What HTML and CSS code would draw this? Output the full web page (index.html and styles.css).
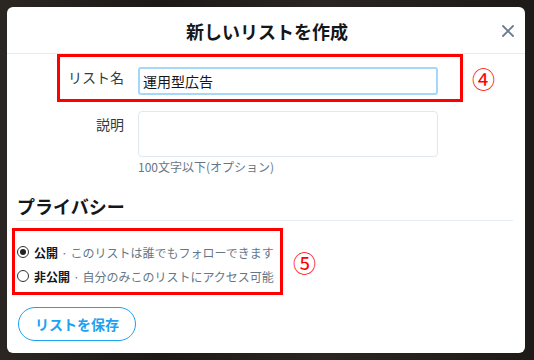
FILE: index.html
```html
<!DOCTYPE html>
<html lang="ja">
<head>
<meta charset="utf-8">
<title>新しいリストを作成</title>
<link rel="stylesheet" href="styles.css">
</head>
<body>
<div class="backdrop">
  <div class="modal">
    <header class="modal-header">
      <h1 class="modal-title">新しいリストを作成</h1>
      <button class="close-btn" aria-label="閉じる">
        <svg width="12" height="12" viewBox="0 0 12 12"><path d="M1 1 L11 11 M11 1 L1 11" stroke="#6b7c8f" stroke-width="1.8" stroke-linecap="round"/></svg>
      </button>
    </header>

    <div class="annot-row annot-row-1">
      <div class="mark-box field-box">
        <label class="field-label">リスト名</label>
        <input class="text-input" type="text" value="運用型広告">
      </div>
      <span class="annot-num">④</span>
    </div>

    <div class="field-row">
      <label class="field-label desc-label">説明</label>
      <div class="field-col">
        <textarea class="text-area"></textarea>
        <div class="help-text">100文字以下(オプション)</div>
      </div>
    </div>

    <h2 class="section-title">プライバシー</h2>

    <div class="annot-row annot-row-2">
      <div class="mark-box radio-box">
        <div class="radio-line">
          <span class="radio checked"></span>
          <span class="radio-name">公開</span><span class="radio-desc">· このリストは誰でもフォローできます</span>
        </div>
        <div class="radio-line">
          <span class="radio"></span>
          <span class="radio-name">非公開</span><span class="radio-desc">· 自分のみこのリストにアクセス可能</span>
        </div>
      </div>
      <span class="annot-num">⑤</span>
    </div>

    <div class="actions">
      <button class="save-btn">リストを保存</button>
    </div>
  </div>
</div>
</body>
</html>
```

FILE: styles.css
```css
* { box-sizing: border-box; }
html, body { margin: 0; padding: 0; }
body {
  width: 534px;
  height: 360px;
  overflow: hidden;
  background: linear-gradient(90deg, #2b2622 0%, #1c1916 30%, #2a2520 60%, #1d1a17 100%);
  font-family: "Noto Sans CJK JP", "Noto Sans", sans-serif;
  color: #14171a;
}
.backdrop {
  padding: 7px 9px 7px 7px;
}
.modal {
  width: 518px;
  height: 346px;
  background: #fff;
  border-radius: 6px;
  display: flex;
  flex-direction: column;
}
.modal-header {
  height: 47px;
  border-bottom: 1px solid #e6ecf0;
  display: flex;
  align-items: center;
  justify-content: center;
  position: relative;
}
.modal-title {
  margin: 0;
  font-size: 18px;
  line-height: 24px;
  font-weight: 700;
  margin-top: 2px;
  margin-left: 2px;
}
.close-btn {
  position: absolute;
  right: 11px;
  top: 18px;
  border: 0;
  background: none;
  padding: 0;
  width: 12px;
  height: 12px;
  display: flex;
}
.annot-row {
  display: flex;
  align-items: center;
}
.annot-row-1 {
  margin-left: 50px;
  gap: 9px;
}
.mark-box {
  border: 3px solid #ff0000;
}
.field-box {
  width: 406px;
  height: 48px;
  display: flex;
  align-items: flex-start;
  padding-top: 10px;
  gap: 14px;
}
.field-label {
  width: 64px;
  text-align: right;
  font-size: 14px;
  line-height: 20px;
  color: #333a40;
  flex: none;
}
.text-input {
  width: 300px;
  height: 28px;
  border: 2px solid #a6d7f8;
  border-radius: 3px;
  padding: 0 3px;
  font-family: "Noto Sans CJK JP", sans-serif;
  font-size: 14px;
  color: #14171a;
  outline: none;
}
.annot-num {
  color: #ff0000;
  font-size: 23px;
  line-height: 24px;
  font-family: "Noto Sans CJK JP", sans-serif;
}
.field-row {
  display: flex;
  gap: 14px;
  margin-left: 53px;
  margin-top: 9px;
}
.desc-label {
  margin-top: 3px;
}
.field-col {
  display: flex;
  flex-direction: column;
}
.text-area {
  width: 300px;
  height: 46px;
  border: 1px solid #e1e8ed;
  border-radius: 4px;
  resize: none;
  outline: none;
  display: block;
  font-family: "Noto Sans CJK JP", sans-serif;
}
.help-text {
  margin-top: 2px;
  font-size: 12px;
  line-height: 16px;
  color: #657786;
}
.section-title {
  margin: 19px 12px 0 10px;
  font-size: 18px;
  line-height: 24px;
  font-weight: 700;
  padding-bottom: 2px;
  border-bottom: 1px solid #e6ecf0;
}
.annot-row-2 {
  margin-left: 5px;
  margin-top: 7px;
  gap: 10px;
}
.radio-box {
  width: 271px;
  height: 67px;
  padding: 9px 0 4px 2px;
}
.radio-line {
  display: flex;
  align-items: center;
  height: 24px;
  font-size: 12px;
  white-space: nowrap;
}
.radio {
  width: 12px;
  height: 12px;
  border: 1px solid #333;
  border-radius: 50%;
  margin-right: 5px;
  flex: none;
  display: flex;
  align-items: center;
  justify-content: center;
  background: #fff;
}
.radio.checked::after {
  content: "";
  width: 6px;
  height: 6px;
  border-radius: 50%;
  background: #222;
}
.radio-name {
  font-weight: 700;
  color: #14171a;
}
.radio-desc {
  color: #657786;
  margin-left: 3px;
}
.actions {
  margin-top: 12px;
  margin-left: 11px;
}
.save-btn {
  height: 34px;
  width: 118px;
  border: 1px solid #1da1f2;
  border-radius: 17px;
  background: #fff;
  color: #1da1f2;
  font-family: "Noto Sans CJK JP", sans-serif;
  font-weight: 700;
  font-size: 14px;
  padding: 0;
}
```
